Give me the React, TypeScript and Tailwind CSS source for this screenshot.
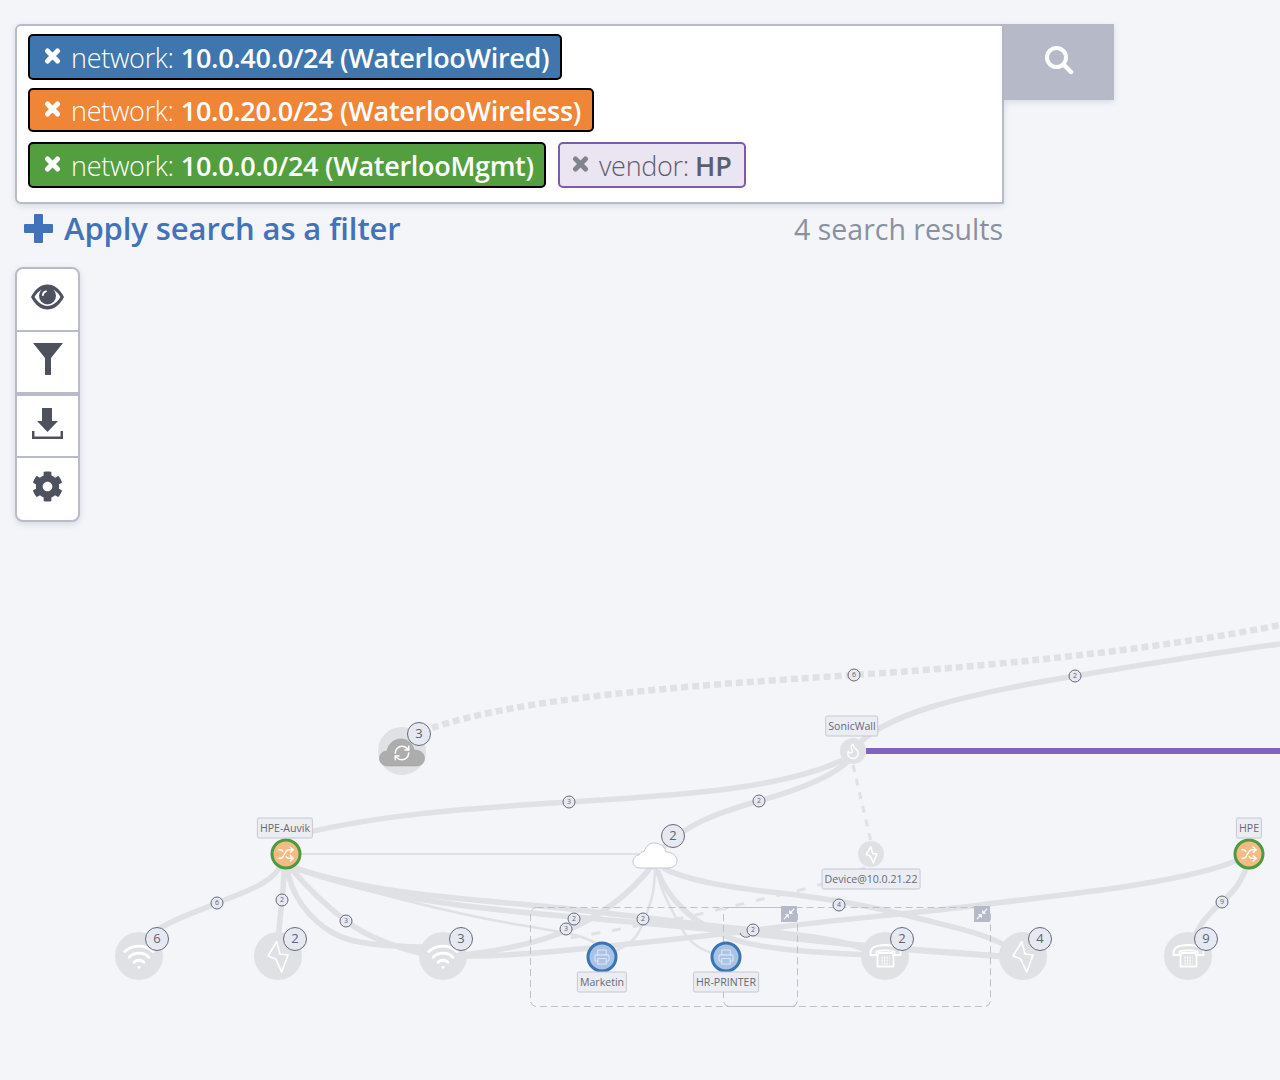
import React from "react";
import { FaCog } from "react-icons/fa";
import { Flame, Printer, RefreshCw, Shuffle, Wifi } from "lucide-react";

const FONT = "font-['Open_Sans',sans-serif]";

function CloseIcon({ className }: { className: string }) {
    return (
        <svg width="17" height="16" viewBox="0 0 17 16" fill="none" stroke="currentColor" strokeWidth="5" strokeLinecap="round" className={`shrink-0 ${className}`}>
            <path d="M3.500 3L13.500 13M13.500 3L3.500 13" />
        </svg>
    );
}

function Chip({ value, className }: { value: string; className: string }) {
    return (
        <div className={`flex items-center whitespace-nowrap rounded-[5px] border-2 border-black pl-[14px] text-white ${className}`}>
            <CloseIcon className="mr-[10px] mt-[-3px]" />
            <span className="text-[27px] font-light leading-none tracking-[-0.3px]">network:</span>
            <span className="ml-[7px] text-[27px] font-semibold leading-none tracking-[-0.3px]">{value}</span>
        </div>
    );
}

function SearchBox() {
    return (
        <div className="flex items-start pl-[15px] pt-6">
            <div className="h-[180px] w-[989px] rounded-l-[6px] border-2 border-[#b8bcc9] bg-white pl-[11px] pt-2 shadow-[0_2px_6px_rgba(90,100,130,0.18)]">
                <Chip value="10.0.40.0/24 (WaterlooWired)" className="h-[46px] w-[534px] bg-[#3f76ae]" />
                <Chip value="10.0.20.0/23 (WaterlooWireless)" className="mt-2 h-[44px] w-[566px] bg-[#ee8537]" />
                <div className="mt-[10px] flex gap-3">
                    <Chip value="10.0.0.0/24 (WaterlooMgmt)" className="h-[46px] w-[518px] bg-[#539e3f]" />
                    <div className="flex h-[46px] w-[188px] items-center whitespace-nowrap rounded-[5px] border-2 border-[#7f5aa6] bg-[#ebe4f1] pl-[12px] text-[#5b5f6c]">
                        <CloseIcon className="mr-[10px] mt-[-2px] text-[#80848f]" />
                        <span className="text-[27px] font-light leading-none tracking-[-0.3px]">vendor:</span>
                        <span className="ml-[6px] text-[27px] font-semibold leading-none">HP</span>
                    </div>
                </div>
            </div>
            <div className="flex h-[76px] w-[110px] items-center justify-center bg-[#b6bac8] shadow-[0_2px_6px_rgba(90,100,130,0.18)]">
                <svg width="30" height="30" viewBox="0 0 30 30" fill="none" stroke="#fff" className="mt-[-4px]">
                    <circle cx="12.500" cy="12.500" r="9.500" strokeWidth="4" />
                    <path d="M19.500 19.500L27 27" strokeWidth="4.500" strokeLinecap="round" />
                </svg>
            </div>
        </div>
    );
}

function FilterRow() {
    return (
        <div className="flex h-[50px] w-[1003px] items-center justify-between pl-[24px]">
            <div className="flex items-center text-[#4272b8]">
                <svg width="29" height="29" viewBox="0 0 29 29" fill="currentColor" className="mt-[-2px]">
                    <path d="M11 0h7a1 1 0 0 1 1 1v9h9a1 1 0 0 1 1 1v7a1 1 0 0 1-1 1h-9v9a1 1 0 0 1-1 1h-7a1 1 0 0 1-1-1v-9H1a1 1 0 0 1-1-1v-7a1 1 0 0 1 1-1h9V1a1 1 0 0 1 1-1z" />
                </svg>
                <span className="ml-[11px] mt-[-2px] text-[31px] font-semibold leading-none tracking-[-0.1px]">Apply search as a filter</span>
            </div>
            <span className="mt-[1px] text-[28.500px] leading-none text-[#8a90a0]">4 search results</span>
        </div>
    );
}

function Toolbar() {
    return (
        <div className="ml-[15px] mt-[13px] w-[65px] overflow-hidden rounded-[8px] border-2 border-[#b8bcc9] bg-white text-[#4e515e] shadow-[0_2px_6px_rgba(90,100,130,0.2)]">
            <div className="flex h-[63px] items-center justify-center border-b-2 border-[#b8bcc9] pb-[6px]">
                <svg width="33" height="26" viewBox="0 0 33 26">
                    <path fillRule="evenodd" fill="currentColor" d="M0 13C4 5 10 .5 16.500 .5S29 5 33 13c-4 8-10 12.500-16.500 12.500S4 21 0 13zM3.500 13c3.500 5.500 8 9 13 9s9.500-3.500 13-9c-2-3.200-4.500-5.800-7.300-7.400a8.500 8.500 0 1 1-11.400 0C8 7.200 5.500 9.800 3.500 13z" />
                    <path fill="#fff" d="M11 11c0-2.200 1.600-4 3.800-4.400.8-.1 1.200.4 1.100 1-.1.500-.5.800-1 .9-1.200.3-2 1.300-2 2.500 0 .5-.4 1-.9 1s-1-.4-1-1z" />
                </svg>
            </div>
            <div className="flex h-[64px] items-center justify-center border-b-4 border-[#b8bcc9] pb-[6px]">
                <svg width="30" height="32" viewBox="0 0 30 32">
                    <path fill="currentColor" d="M0 0h30L18 15v17h-6V15z" />
                </svg>
            </div>
            <div className="flex h-[62px] items-center justify-center border-b-2 border-[#b8bcc9] pb-[6px]">
                <svg width="31" height="31" viewBox="0 0 31 31">
                    <path fill="currentColor" d="M10 0h10v13h6L15.500 24 5 13h5z" />
                    <path fill="none" stroke="currentColor" strokeWidth="2.500" d="M1.200 23v6.800h28.600V23" />
                </svg>
            </div>
            <div className="flex h-[62px] items-center justify-center pb-[5px]">
                <FaCog className="h-[31px] w-[31px]" />
            </div>
        </div>
    );
}

function Bolt({ s, w = 1.700 }: { s: number; w?: number }) {
    return (
        <svg width={s} height={s} viewBox="-18 -18 36 36" fill="none" stroke="#fff" strokeWidth={w} strokeLinejoin="round">
            <path d="M-1.300-14.300L2-2 10-1 3.700 16-2.300 3-10 0z" />
        </svg>
    );
}

function Phone() {
    return (
        <svg width="34" height="30" viewBox="-17 -15 34 30" fill="none" stroke="#fff" strokeWidth="1.800" strokeLinejoin="round">
            <path d="M-14.500-3C-14.500-9-7-11 .5-11S15.500-9 15.500-3V-1H9.500V-4.500C5-6-4-6-8.500-4.500V-1H-14.500z" />
            <path d="M-6.500-3H7.500L8.500 0V10.500H-7.500V0z" fill="#e0e1e4" />
            <path d="M-3.500 1.500H4.500M-3.500 4.500H4.500M-3.500 7.500H4.500" strokeWidth="2" strokeDasharray="1.300 1.200" />
        </svg>
    );
}

function Compress({ x, y }: { x: number; y: number }) {
    return (
        <div className="absolute flex h-4 w-4 items-center justify-center bg-[#b6bac8]" style={{ left: x - 8, top: y - 8 }}>
            <svg width="12" height="12" viewBox="0 0 12 12" fill="#fff">
                <path d="M11.500 1.300L8.600 4.200 10.200 5.800H6.200V1.800L7.800 3.400 10.700.5zM.5 10.700L3.400 7.800 1.800 6.200H5.800V10.200L4.200 8.600 1.300 11.500z" />
            </svg>
        </div>
    );
}

function Badge({ x, y, n, small }: { x: number; y: number; n: number; small?: boolean }) {
    const size = small ? "h-[13px] w-[13px] text-[7px]" : "h-[24px] w-[24px] text-[13px]";
    return (
        <div
            className={`absolute flex -translate-x-1/2 -translate-y-1/2 items-center justify-center rounded-full border border-[#666a78] bg-[#e6e9f2] text-[#5f6370] ${size}`}
            style={{ left: x, top: y }}
        >
            {n}
        </div>
    );
}

function Label({ x, y, text }: { x: number; y: number; text: string }) {
    return (
        <div
            className="absolute flex h-[21px] -translate-x-1/2 -translate-y-1/2 items-center whitespace-nowrap rounded-[2px] border border-[#c5c8d3] bg-[#ecedf2] px-[2px] text-[10.600px] text-[#656a77]"
            style={{ left: x, top: y }}
        >
            {text}
        </div>
    );
}

function GreyNode({ x, y, children, r = 24 }: { x: number; y: number; children: React.ReactNode; r?: number }) {
    return (
        <div
            className="absolute flex -translate-x-1/2 -translate-y-1/2 items-center justify-center rounded-full bg-[#e0e1e4]"
            style={{ left: x, top: y, width: r * 2, height: r * 2 }}
        >
            {children}
        </div>
    );
}

function SwitchNode({ x, y }: { x: number; y: number }) {
    return (
        <div
            className="absolute flex h-[31px] w-[31px] -translate-x-1/2 -translate-y-1/2 items-center justify-center rounded-full border-[3px] border-[#4d9b3f] bg-[#f4bb84]"
            style={{ left: x, top: y }}
        >
            <Shuffle className="h-[17px] w-[17px] text-white" strokeWidth={2} />
        </div>
    );
}

function PrinterNode({ x, y }: { x: number; y: number }) {
    return (
        <div
            className="absolute flex h-[31px] w-[31px] -translate-x-1/2 -translate-y-1/2 items-center justify-center rounded-full border-[3px] border-[#3b74b2] bg-[#a9c3e6]"
            style={{ left: x, top: y }}
        >
            <Printer className="h-[17px] w-[17px] text-[#dfe8f5]" strokeWidth={1.500} />
        </div>
    );
}

const wide = [
    "M853 750C880 715 960 695 1075 676S1220 652 1280 644",
    "M285 838C370 815 470 808 569 802S790 790 853 755",
    "M655 857C680 825 720 812 759 801S840 775 853 755",
    "M283 862C273 885 240 893 217 903S170 920 150 935",
    "M284 866C284 880 283 890 282 900S279 925 278 945",
    "M287 866C290 895 310 920 333 933S390 946 443 948",
    "M289 866C305 885 325 905 346 921S400 950 443 958",
    "M295 868C370 892 450 898 520 904S700 925 780 933 860 950 885 956",
    "M295 868C370 895 450 905 520 912S680 925 780 937 940 950 1023 958",
    "M443 957C520 950 600 935 655 862",
    "M657 870C668 900 695 925 730 938S820 952 885 956",
    "M663 868C690 882 735 888 780 893S880 908 913 917 990 932 1023 956",
    "M1238 860C1180 885 1040 897 980 905S850 918 780 927 650 942 570 950 470 955 443 957",
    "M1247 866C1240 885 1232 893 1222 902S1195 925 1188 956",
    "M760 932C810 942 900 950 1023 958",
];

const thin = [
    "M296 870C380 895 460 915 520 925S580 935 600 945",
    "M655 865C655 895 650 905 643 923S630 945 602 957",
    "M656 865C660 890 667 900 677 920S695 950 725 957",
];

const canvasBadges = [
    { x: 157, y: 939, n: 6 },
    { x: 295, y: 939, n: 2 },
    { x: 461, y: 939, n: 3 },
    { x: 902, y: 939, n: 2 },
    { x: 1040, y: 939, n: 4 },
    { x: 1206, y: 939, n: 9 },
    { x: 419, y: 734, n: 3 },
    { x: 673, y: 836, n: 2 },
];

const smallBadges = [
    { x: 854, y: 675, n: 6 },
    { x: 1075, y: 676, n: 2 },
    { x: 569, y: 802, n: 3 },
    { x: 759, y: 801, n: 2 },
    { x: 217, y: 903, n: 6 },
    { x: 282, y: 900, n: 2 },
    { x: 346, y: 921, n: 3 },
    { x: 574, y: 919, n: 2 },
    { x: 566, y: 929, n: 3 },
    { x: 643, y: 919, n: 2 },
    { x: 753, y: 930, n: 2 },
    { x: 839, y: 905, n: 4 },
    { x: 1222, y: 902, n: 9 },
];

function Canvas() {
    return (
        <div className="absolute inset-0 overflow-hidden">
            <svg width="1280" height="1080" className="absolute left-0 top-0" fill="none" stroke="#e0e1e4">
                <path d="M432 728C520 698 680 686 854 675S1180 645 1280 625" strokeWidth="6.500" strokeDasharray="7 4" />
                {wide.map((d) => (
                    <path key={d} d={d} strokeWidth="5.500" />
                ))}
                {thin.map((d) => (
                    <path key={d} d={d} strokeWidth="2.500" />
                ))}
                <path d="M300 854H640" strokeWidth="2" />
                <path d="M853 765L871 842" strokeWidth="3" strokeDasharray="7 7" />
                <path d="M865 868L813 887 687 917 570 938" strokeWidth="3" strokeDasharray="9 12" />
                <path d="M866 751H1280" stroke="#7f63bd" strokeWidth="6" />
                <path d="M740 933A6.500 6.500 0 0 0 750 936" stroke="#666a78" strokeWidth="1" />
                <g stroke="#bcc0cb" strokeWidth="1" strokeDasharray="7 4">
                    <rect x="530.500" y="907.500" width="267" height="99" rx="6" />
                    <rect x="723.500" y="907.500" width="267" height="99" rx="6" />
                </g>
            </svg>

            <Compress x={789} y={914} />
            <Compress x={982} y={914} />

            <GreyNode x={139} y={956}><Wifi className="h-[34px] w-[34px] text-white" strokeWidth={2} /></GreyNode>
            <GreyNode x={278} y={956}><Bolt s={36} /></GreyNode>
            <GreyNode x={443} y={956}><Wifi className="h-[34px] w-[34px] text-white" strokeWidth={2} /></GreyNode>
            <GreyNode x={885} y={956}><Phone /></GreyNode>
            <GreyNode x={1023} y={956}><Bolt s={36} /></GreyNode>
            <GreyNode x={1188} y={956}><Phone /></GreyNode>

            <GreyNode x={402} y={751}>
                <svg width="46" height="32" viewBox="0 0 46 32" className="mt-[2px]">
                    <path fill="#adadad" stroke="#999" strokeWidth=".5" d="M9 30C3 30 .5 26 .5 22.500 .5 18 4 15 8 15 9 8 15 3 22 3c7 0 12 5 13 11 6 0 10.500 3 10.500 8.500C45.500 27 42 30 37 30z" />
                </svg>
                <RefreshCw className="absolute mt-[4px] h-[18px] w-[18px] text-white" strokeWidth={2} />
            </GreyNode>

            <GreyNode x={853} y={751} r={13}><Flame className="h-[18px] w-[18px] text-white" strokeWidth={1.800} /></GreyNode>
            <GreyNode x={871} y={854} r={13}><Bolt s={19} w={3} /></GreyNode>

            <SwitchNode x={285.500} y={854} />
            <SwitchNode x={1249} y={854} />
            <PrinterNode x={602} y={957} />
            <PrinterNode x={725.500} y={957} />

            <svg width="46" height="30" viewBox="0 0 46 30" className="absolute left-[632px] top-[840px]">
                <path fill="#fff" stroke="#c4c6cc" strokeWidth="1" d="M8 28C3 28 1 24.500 1 21.500 1 18 3.500 15.500 7 15 8 13 9.500 11.500 12 11.500 14 6 18 3 22 3c6 0 11 3.500 12 9 6 0 11 3.500 11 8.500C45 25 41 28 36 28z" />
            </svg>

            <Label x={285} y={828} text="HPE-Auvik" />
            <Label x={1249} y={828} text="HPE" />
            <Label x={852} y={726} text="SonicWall" />
            <Label x={871} y={879} text="Device@10.0.21.22" />
            <Label x={602} y={982} text="Marketin" />
            <Label x={726} y={982} text="HR-PRINTER" />

            {canvasBadges.map((b) => (
                <Badge key={`${b.x}-${b.y}`} {...b} />
            ))}
            {smallBadges.map((b) => (
                <Badge key={`${b.x}-${b.y}`} {...b} small />
            ))}
        </div>
    );
}

export default function App() {
    return (
        <div className={`relative h-[1080px] w-full overflow-hidden bg-[#f3f5f9] ${FONT}`}>
            <Canvas />
            <div className="relative">
                <SearchBox />
                <FilterRow />
                <Toolbar />
            </div>
        </div>
    );
}
